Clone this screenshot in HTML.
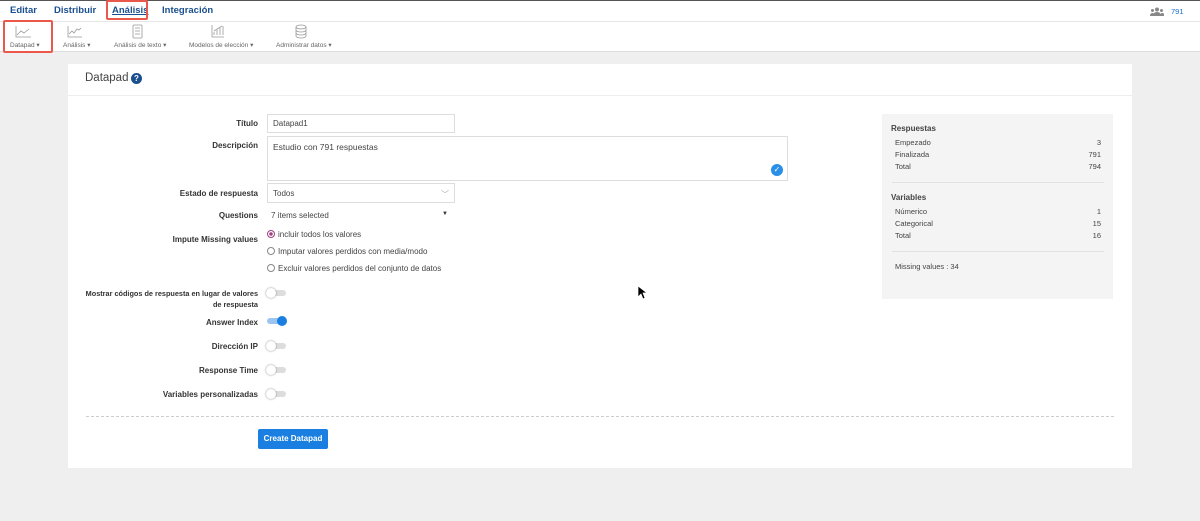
<!DOCTYPE html>
<html><head><meta charset="utf-8"><style>
*{box-sizing:border-box;margin:0;padding:0}
body{width:1200px;height:521px;background:#efefef;font-family:"Liberation Sans",sans-serif;position:relative;overflow:hidden;color:#333}
.abs{position:absolute}
.top{left:0;top:0;width:1200px;height:22px;background:#fff;border-top:1px solid #555;border-bottom:1px solid #e6e6e6}
.nav{top:5px;font-size:9.5px;color:#1a4f8f;font-weight:bold}
.tb{left:0;top:22px;width:1200px;height:30px;background:#fff;border-bottom:1px solid #ddd}
.tl{top:41px;font-size:6.5px;color:#666}
.red{border:2.5px solid #e9584b;border-radius:2px}
.card{left:68px;top:64px;width:1064px;height:404px;background:#fff}
.lbl{font-size:8px;font-weight:bold;color:#333;text-align:right;width:200px;left:58px}
.inp{border:1px solid #ddd;background:#fff;font-size:8px;color:#444;padding:5px}
.txt{font-size:8px;color:#444}
.radio{width:8px;height:8px;border:1px solid #888;border-radius:50%;background:#fff}
.tog{width:19px;height:6px;border-radius:3px;background:#ddd}
.knob{width:10px;height:10px;border-radius:50%;background:#fff;box-shadow:0 0 2px #888;top:-2px;left:-1px}
.side{left:882px;top:114px;width:231px;height:185px;background:#f4f4f4}
.sr{font-size:7.5px;color:#444;left:895px;width:206px}
.sr span{float:right}
</style></head><body>
<div class="abs top"></div>
<div class="abs nav" style="left:10px">Editar</div>
<div class="abs nav" style="left:54px">Distribuir</div>
<div class="abs nav" style="left:112px;text-decoration:underline">Análisis</div>
<div class="abs red" style="left:106px;top:0px;width:42px;height:20px"></div>
<div class="abs nav" style="left:162px">Integración</div>
<svg class="abs" style="left:1150px;top:7px" width="14" height="9" fill="#888"><circle cx="7" cy="2.5" r="2"/><path d="M3 9c0-3 2-4 4-4s4 1 4 4z"/><circle cx="2.5" cy="3.5" r="1.5"/><circle cx="11.5" cy="3.5" r="1.5"/><path d="M0 9c0-2 1-3 2.5-3S4 7 4 9zM10 9c0-2 1-3 2.5-3S14 7 14 9z"/></svg>
<div class="abs" style="left:1171px;top:7px;font-size:7.5px;color:#1a6fd0">791</div>
<div class="abs tb"></div>
<svg class="abs" style="left:0;top:22px" width="350" height="20" fill="none" stroke="#999" stroke-width="0.8">
<path d="M16 4v11h15M17 13l4-4 3 2 5-4"/>
<path d="M68 4v11h14M69 12l3-3 2 2 3-4 2 1 2-2"/>
<rect x="133" y="3" width="9" height="13" rx="1"/><path d="M135 6h5M135 9h5M135 12h5"/>
<path d="M212 3v12h12M214 13v-3M217 13v-5M220 13v-7M223 13v-9M214 9l8-5"/>
<ellipse cx="301" cy="5" rx="5" ry="2"/><path d="M296 5v9c0 1 2 2 5 2s5-1 5-2V5M296 8c0 1 2 2 5 2s5-1 5-2M296 11c0 1 2 2 5 2s5-1 5-2"/>
</svg>
<div class="abs tl" style="left:10px">Datapad ▾</div>
<div class="abs red" style="left:3px;top:20px;width:50px;height:33px"></div>
<div class="abs tl" style="left:63px">Análisis ▾</div>
<div class="abs tl" style="left:114px">Análisis de texto ▾</div>
<div class="abs tl" style="left:189px">Modelos de elección ▾</div>
<div class="abs tl" style="left:276px">Administrar datos ▾</div>
<div class="abs card"></div>
<div class="abs" style="left:85px;top:72px;font-size:11.5px;color:#444">Datapad</div>
<div class="abs" style="left:131px;top:73px;width:11px;height:11px;border-radius:50%;background:#1a4f8f;color:#fff;font-size:8px;font-weight:bold;text-align:center;line-height:11px">?</div>
<div class="abs" style="left:68px;top:95px;width:1064px;height:1px;background:#eee"></div>
<div class="abs lbl" style="top:119px">Título</div>
<div class="abs inp" style="left:267px;top:114px;width:188px;height:19px;padding-top:4px">Datapad1</div>
<div class="abs lbl" style="top:141px">Descripción</div>
<div class="abs inp" style="left:267px;top:136px;width:521px;height:45px;font-size:8.5px">Estudio con 791 respuestas</div>
<div class="abs" style="left:771px;top:164px;width:12px;height:12px;border-radius:50%;background:#2a8fe6;color:#fff;font-size:8px;text-align:center;line-height:12px">✓</div>
<div class="abs lbl" style="top:189px">Estado de respuesta</div>
<div class="abs inp" style="left:267px;top:183px;width:188px;height:20px;padding-top:5px">Todos<span style="float:right;color:#aaa">﹀</span></div>
<div class="abs lbl" style="top:211px">Questions</div>
<div class="abs txt" style="left:271px;top:211px">7 items selected</div>
<div class="abs" style="left:442px;top:211px;font-size:6px">▼</div>
<div class="abs lbl" style="top:235px">Impute Missing values</div>
<div class="abs radio" style="left:267px;top:230px;border-color:#a04080;background:radial-gradient(#a04080 40%,#fff 45%)"></div>
<div class="abs txt" style="left:278px;top:230px">incluir todos los valores</div>
<div class="abs radio" style="left:267px;top:247px"></div>
<div class="abs txt" style="left:278px;top:247px">Imputar valores perdidos con media/modo</div>
<div class="abs radio" style="left:267px;top:264px"></div>
<div class="abs txt" style="left:278px;top:264px">Excluir valores perdidos del conjunto de datos</div>
<div class="abs lbl" style="top:288px;line-height:11px;font-size:7.3px">Mostrar códigos de respuesta en lugar de valores<br>de respuesta</div>
<div class="abs tog" style="left:267px;top:290px"><div class="abs knob"></div></div>
<div class="abs lbl" style="top:318px">Answer Index</div>
<div class="abs tog" style="left:267px;top:318px;background:#9cc4f0"><div class="abs knob" style="left:10px;background:#1a7fe0;box-shadow:none"></div></div>
<div class="abs lbl" style="top:342px">Dirección IP</div>
<div class="abs tog" style="left:267px;top:343px"><div class="abs knob"></div></div>
<div class="abs lbl" style="top:366px">Response Time</div>
<div class="abs tog" style="left:267px;top:367px"><div class="abs knob"></div></div>
<div class="abs lbl" style="top:390px">Variables personalizadas</div>
<div class="abs tog" style="left:267px;top:391px"><div class="abs knob"></div></div>
<div class="abs" style="left:86px;top:416px;width:1028px;border-top:1px dashed #ccc"></div>
<div class="abs" style="left:258px;top:429px;width:70px;height:20px;background:#1a7fe0;border-radius:2px;color:#fff;font-size:8px;font-weight:bold;text-align:center;line-height:20px">Create Datapad</div>
<div class="abs side"></div>
<div class="abs" style="left:891px;top:124px;font-size:8px;font-weight:bold;color:#444">Respuestas</div>
<div class="abs sr" style="top:138px">Empezado<span>3</span></div>
<div class="abs sr" style="top:150px">Finalizada<span>791</span></div>
<div class="abs sr" style="top:162px">Total<span>794</span></div>
<div class="abs" style="left:892px;top:182px;width:212px;height:1px;background:#e2e2e2"></div>
<div class="abs" style="left:891px;top:193px;font-size:8px;font-weight:bold;color:#444">Variables</div>
<div class="abs sr" style="top:207px">Númerico<span>1</span></div>
<div class="abs sr" style="top:219px">Categorical<span>15</span></div>
<div class="abs sr" style="top:231px">Total<span>16</span></div>
<div class="abs" style="left:892px;top:251px;width:212px;height:1px;background:#e2e2e2"></div>
<div class="abs sr" style="top:262px">Missing values : 34</div>
<svg class="abs" style="left:637px;top:285px" width="10" height="15"><path d="M1 1v11l3-3 2 5 2-1-2-5h4z" fill="#000" stroke="#fff" stroke-width="0.7"/></svg>
</body></html>
